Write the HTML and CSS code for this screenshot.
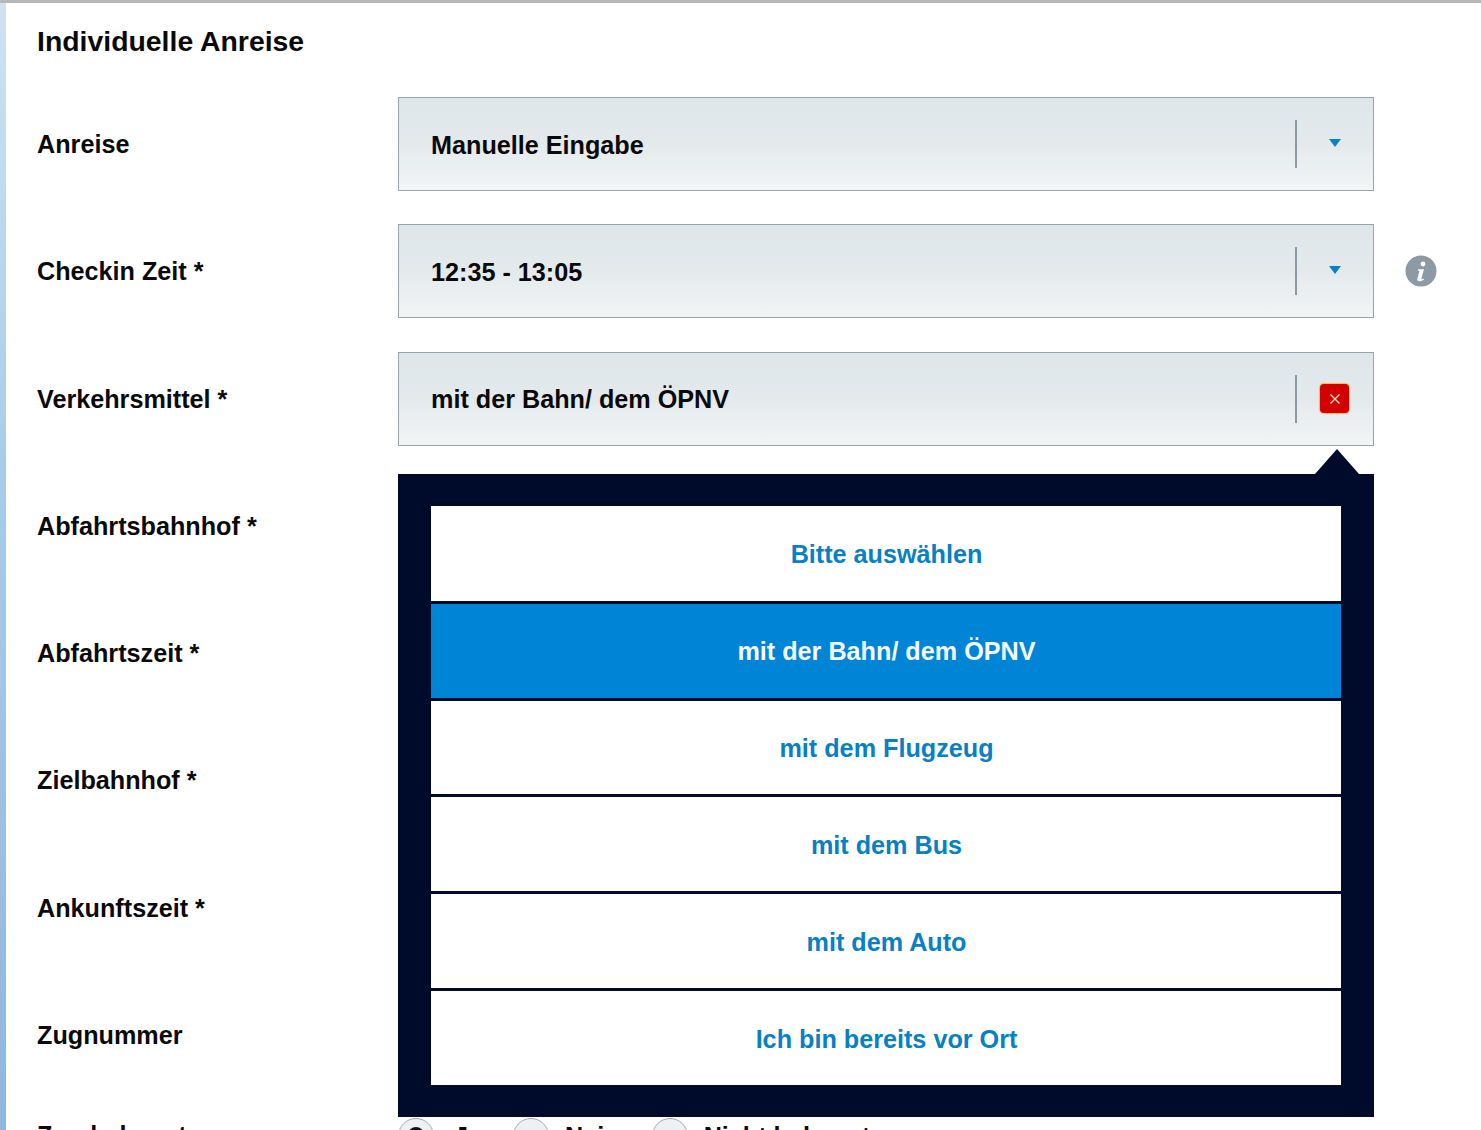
FILE: index.html
```html
<!DOCTYPE html>
<html lang="de">
<head>
<meta charset="utf-8">
<title>Individuelle Anreise</title>
<link rel="stylesheet" href="styles.css">
</head>
<body>
<div class="page">
  <h1 class="title">Individuelle Anreise</h1>
  <div class="form">
    <div class="row">
      <div class="label">Anreise</div>
      <div class="select">
        <span class="value">Manuelle Eingabe</span>
        <span class="divider"></span>
        <span class="handle"><span class="caret"></span></span>
      </div>
    </div>
    <div class="row">
      <div class="label">Checkin Zeit *</div>
      <div class="select">
        <span class="value">12:35 - 13:05</span>
        <span class="divider"></span>
        <span class="handle"><span class="caret"></span></span>
      </div>
      <svg class="info" viewBox="0 0 32 32" aria-hidden="true">
        <circle cx="16" cy="16" r="15.5" fill="#8b9aa5"/>
        <circle cx="18" cy="9" r="2.4" fill="#fff"/>
        <path d="M13 14.2h6l-2.6 9.2c-.2.8.5 1 1.200.6l1.100-.6.300 1c-1.500 1.200-3 1.800-4.500 1.800-1.800 0-2.600-1-2.100-2.700l1.900-6.800c.1-.6-.2-.8-1.500-.9z" fill="#fff"/>
      </svg>
    </div>
    <div class="row">
      <div class="label">Verkehrsmittel *</div>
      <div class="select-wrap">
        <div class="select">
          <span class="value">mit der Bahn/ dem ÖPNV</span>
          <span class="divider"></span>
          <span class="handle">
            <span class="close">
              <svg viewBox="0 0 12 12" class="close-x" aria-hidden="true"><path d="M1.500 1.500l9 9M10.500 1.500l-9 9" stroke="#ffe3c8" stroke-width="1.300" fill="none"/></svg>
            </span>
          </span>
        </div>
        <ul class="dropdown">
          <li class="option">Bitte auswählen</li>
          <li class="option selected">mit der Bahn/ dem ÖPNV</li>
          <li class="option">mit dem Flugzeug</li>
          <li class="option">mit dem Bus</li>
          <li class="option">mit dem Auto</li>
          <li class="option">Ich bin bereits vor Ort</li>
        </ul>
      </div>
    </div>
    <div class="row"><div class="label">Abfahrtsbahnhof *</div></div>
    <div class="row"><div class="label">Abfahrtszeit *</div></div>
    <div class="row"><div class="label">Zielbahnhof *</div></div>
    <div class="row"><div class="label">Ankunftszeit *</div></div>
    <div class="row"><div class="label">Zugnummer</div></div>
    <div class="row row-radio">
      <div class="label">Zug bekannt</div>
      <div class="radios">
        <span class="radio-item"><span class="radio checked"></span>Ja</span>
        <span class="radio-item"><span class="radio"></span>Nein</span>
        <span class="radio-item"><span class="radio"></span>Nicht bekannt</span>
      </div>
    </div>
  </div>
</div>
</body>
</html>
```
FILE: styles.css
```css
html, body {
  margin: 0;
  padding: 0;
  height: 100%;
  overflow: hidden;
  background: #fff;
}
body {
  font-family: "Liberation Sans", Arial, sans-serif;
  font-weight: 700;
  font-size: 25.2px;
  color: #0a0a0a;
}
.page {
  height: 1130px;
  box-sizing: border-box;
  border-top: 3px solid #b5b7b9;
  padding-left: 37px;
  background: linear-gradient(180deg, #cfe2f1 0%, #a9cde9 40%, #8fb6e2 100%) left top / 6px 100% no-repeat, #fff;
}
.title {
  margin: 0;
  height: 94px;
  padding-top: 20px;
  box-sizing: border-box;
  font-size: 28.4px;
  line-height: 37px;
  font-weight: 700;
}
.form {
  display: flex;
  flex-direction: column;
  gap: 33.3px;
}
.row {
  display: flex;
  align-items: center;
  height: 94px;
  flex: none;
}
.row-radio {
  height: 36px;
  margin-top: 1.6px;
  align-items: flex-start;
}
.label {
  width: 361px;
  flex: none;
  line-height: 30px;
}
.row-radio .label {
  line-height: 36px;
}
.select-wrap {
  position: relative;
  width: 976px;
  flex: none;
}
.select {
  display: flex;
  align-items: center;
  width: 976px;
  height: 94px;
  flex: none;
  box-sizing: border-box;
  border: 1.500px solid #9aa3a9;
  background: linear-gradient(180deg, #dde6e9 0%, #e4eaec 50%, #f2f4f5 100%);
  padding-left: 32px;
}
.value {
  flex: 1;
  padding-top: 2px;
}
.divider {
  width: 2px;
  height: 48px;
  background: #8e9aa2;
  flex: none;
}
.handle {
  width: 76px;
  flex: none;
  display: flex;
  align-items: center;
  justify-content: center;
}
.caret {
  width: 0;
  height: 0;
  border-left: 6.500px solid transparent;
  border-right: 6.500px solid transparent;
  border-top: 8.500px solid #0a80c8;
  margin-top: -3px;
}
.info {
  width: 32px;
  height: 32px;
  margin-left: 31px;
  flex: none;
}
.close {
  width: 29px;
  height: 29px;
  margin-left: -1px;
  background: #d30000;
  border-radius: 4px;
  box-shadow: 0 0 1px 1px #f3b45a;
  display: flex;
  align-items: center;
  justify-content: center;
}
.close-x {
  width: 12px;
  height: 12px;
}
.dropdown {
  position: absolute;
  top: 122.4px;
  left: 0;
  right: 0;
  height: 643px;
  box-sizing: border-box;
  margin: 0;
  padding: 32px 33px;
  list-style: none;
  background: #000a2b;
  display: flex;
  flex-direction: column;
  z-index: 2;
}
.dropdown::before {
  content: "";
  position: absolute;
  top: -25px;
  right: 15px;
  width: 0;
  height: 0;
  border-left: 22.500px solid transparent;
  border-right: 22.500px solid transparent;
  border-bottom: 25px solid #000a2b;
}
.option {
  flex: 1;
  display: flex;
  align-items: center;
  justify-content: center;
  background: #fff;
  color: #0780c4;
  box-sizing: border-box;
  border-top: 3px solid #000a2b;
  padding: 2px 0 0 1px;
}
.option:first-child {
  border-top: 0;
  padding-top: 3px;
}
.option.selected {
  background: #0085d6;
  color: #f4f9fc;
}
.radios {
  display: flex;
  align-items: flex-start;
  line-height: 36px;
}
.radio-item {
  display: flex;
  align-items: flex-start;
  gap: 16px;
  margin-right: 32px;
  padding-top: 1px;
}
.radio-item:first-child {
  gap: 20px;
  margin-right: 31px;
}
.radio {
  width: 36px;
  height: 36px;
  box-sizing: border-box;
  border: 1.500px solid #a3a9ae;
  border-radius: 50%;
  background: #eef1f3;
  flex: none;
  position: relative;
}
.radio.checked::after {
  content: "";
  position: absolute;
  left: 9px;
  top: 8px;
  width: 16px;
  height: 16px;
  border-radius: 50%;
  background: #111;
}
```
